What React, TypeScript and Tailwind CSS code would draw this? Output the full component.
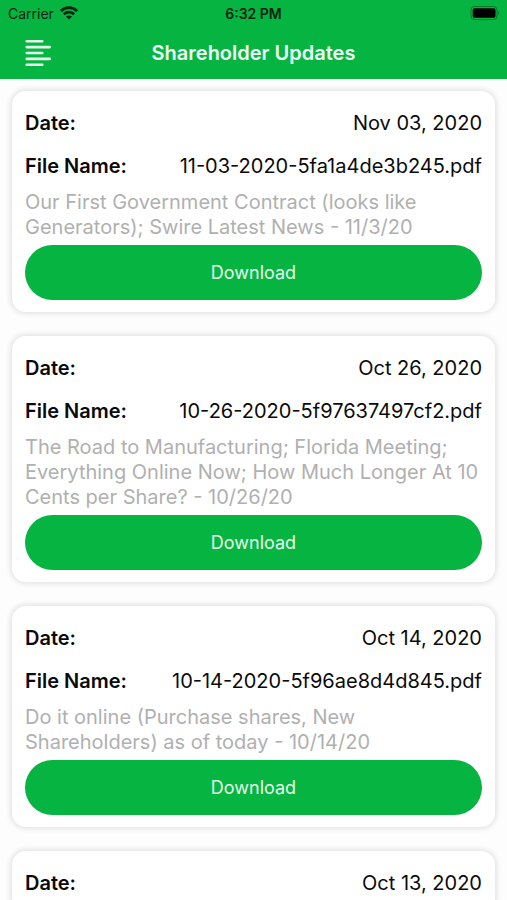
type Update = {
  date: string;
  fileName?: string;
  description?: string;
};

const updates: Update[] = [
  {
    date: "Nov 03, 2020",
    fileName: "11-03-2020-5fa1a4de3b245.pdf",
    description:
      "Our First Government Contract (looks like Generators); Swire Latest News - 11/3/20",
  },
  {
    date: "Oct 26, 2020",
    fileName: "10-26-2020-5f97637497cf2.pdf",
    description:
      "The Road to Manufacturing; Florida Meeting; Everything Online Now; How Much Longer At 10 Cents per Share? - 10/26/20",
  },
  {
    date: "Oct 14, 2020",
    fileName: "10-14-2020-5f96ae8d4d845.pdf",
    description:
      "Do it online (Purchase shares, New Shareholders) as of today - 10/14/20",
  },
  // No file attached yet
  { date: "Oct 13, 2020" },
];

function WifiIcon() {
  return (
    <svg className="h-[14px] w-[18px]" viewBox="0 0 18 14" fill="none" stroke="#03250f" strokeWidth="2.6">
      <path d="M.9 5C5.4 .5 12.6 .5 17.1 5" />
      <path d="M3.8 8.2c3-2.8 7.4-2.8 10.4 0" />
      <path d="M6 10.6c1.8-1.5 4.2-1.5 6 0l-3 3z" fill="#03250f" stroke="none" />
    </svg>
  );
}

function BatteryIcon() {
  return (
    <svg className="h-[14px] w-[30px]" viewBox="0 0 30 14" fill="none">
      <rect x="2" y="0.5" width="26" height="13" rx="3.5" stroke="#047a2c" />
      <rect x="3.7" y="2.3" width="22.8" height="9.4" rx="1.8" fill="#000" />
      <path d="M28.8 5c1.6.6 1.6 3.4 0 4z" fill="#047a2c" />
    </svg>
  );
}

function StatusBar() {
  return (
    <div className="grid h-[26px] grid-cols-3 items-center px-2 text-[14px] text-[#03250f]">
      <div className="flex items-center gap-[6px]">
        <span>Carrier</span>
        <WifiIcon />
      </div>
      <span className="text-center font-semibold">6:32 PM</span>
      <div className="flex justify-end">
        <BatteryIcon />
      </div>
    </div>
  );
}

function Header() {
  return (
    <header className="bg-[#06b442]">
      <StatusBar />
      <div className="grid h-[53px] grid-cols-[52px_1fr_52px] items-center">
        <button type="button" aria-label="Menu" className="flex justify-end">
          <svg className="h-[28px] w-[28px]" viewBox="0 0 28 28" stroke="#e4fbe9" strokeWidth="2.6" strokeLinecap="round">
            <path d="M2.7 2.2h15.6M2.7 8.1h23M2.7 14h15.6M2.7 19.9h23M2.7 25.8h15.6" />
          </svg>
        </button>
        <h1 className="text-center text-[20px] font-semibold text-[#f0fff4]">
          Shareholder Updates
        </h1>
      </div>
    </header>
  );
}

function UpdateCard({ update }: { update: Update }) {
  return (
    <article className="rounded-[14px] bg-white px-[13px] pt-[10px] pb-3 shadow-[0_0_5px_2px_rgba(0,0,0,0.1)]">
      <dl className="text-[20px] text-[#0a0a0a]">
        <div className="flex h-[43px] items-center justify-between">
          <dt className="font-semibold">Date:</dt>
          <dd>{update.date}</dd>
        </div>
        {update.fileName && (
          <div className="flex h-[43px] items-center justify-between">
            <dt className="font-semibold">File Name:</dt>
            <dd>{update.fileName}</dd>
          </div>
        )}
      </dl>
      {update.description && (
        <p className="mt-[3px] mb-[5px] text-[20px] leading-[25px] text-[#b0b0b0]">
          {update.description}
        </p>
      )}
      {update.fileName && (
        <button
          type="button"
          className="h-[55px] w-full rounded-full bg-[#06b442] text-[18px] text-[#e4fbe9]"
        >
          Download
        </button>
      )}
    </article>
  );
}

export default function App() {
  return (
    <div className="min-h-screen bg-[#fdfdfd] font-['Inter',sans-serif]">
      <Header />
      <main className="flex flex-col gap-6 px-3 pt-3">
        {updates.map((update) => (
          <UpdateCard key={update.date} update={update} />
        ))}
      </main>
    </div>
  );
}
